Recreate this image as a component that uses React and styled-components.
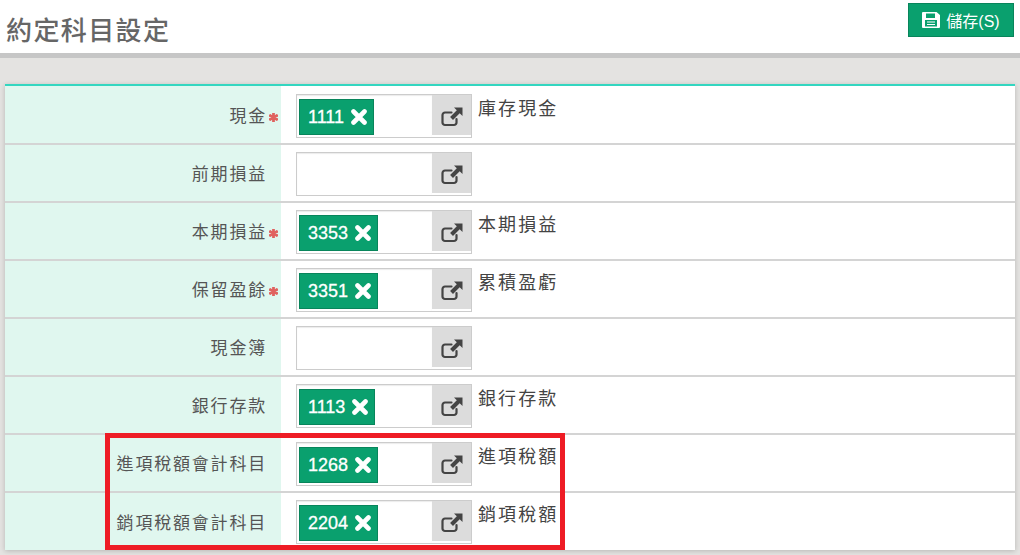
import React from "react";
import styled, { createGlobalStyle } from "styled-components";
import { FaAsterisk } from "react-icons/fa";

const GlobalStyle = createGlobalStyle`
  html, body {
    margin: 0;
    padding: 0;
    height: 555px;
    overflow: hidden;
    background: #e4e3e1;
    font-family: "Liberation Sans", "Noto Sans CJK TC", sans-serif;
  }
`;

const Header = styled.header`
  height: 58px;
  box-sizing: border-box;
  background: #fff;
  border-bottom: 5px solid #c6c6c6;
  display: flex;
  justify-content: space-between;
  padding: 3px 6px 0 6px;
`;

const Title = styled.h1`
  margin: 0;
  padding-top: 10px;
  font-size: 26px;
  line-height: 36px;
  font-weight: 500;
  letter-spacing: 1.4px;
  color: #666;
`;

const SaveButton = styled.button`
  width: 106px;
  height: 34px;
  box-sizing: border-box;
  display: flex;
  align-items: center;
  justify-content: center;
  gap: 6px;
  padding: 0;
  background: #0aa06e;
  border: 1px solid #08855b;
  color: #fff;
  font-family: inherit;
  font-size: 16px;
`;

const Card = styled.main`
  margin: 26px 5px 0;
  background: #fff;
  border-top: 2px solid #33d6c0;
  box-shadow: 0 1px 5px rgba(0, 0, 0, 0.2);
`;

const Row = styled.div`
  display: grid;
  grid-template-columns: 276px 1fr;
  height: ${(p) => (p.$first ? 59 : p.$last ? 57 : 58)}px;
  box-sizing: border-box;
  border-bottom: ${(p) => (p.$last ? "none" : "2px solid #d4d4d4")};
`;

const Label = styled.div`
  background: #e0f7ef;
  display: flex;
  align-items: center;
  justify-content: flex-end;
  padding-right: 14px;
  padding-bottom: 1px;
  padding-top: ${(p) => (p.$first ? 1 : 0)}px;
  font-size: 17px;
  letter-spacing: 1.8px;
  color: #555;
  position: relative;
`;

const Required = styled.span`
  position: absolute;
  right: 3px;
  top: ${(p) => (p.$first ? 27 : 26)}px;
  color: #e0625f;
  font-size: 9px;
  line-height: 9px;
  display: flex;
  svg {
    stroke: currentColor;
    stroke-width: 70px;
  }
`;

const Value = styled.div`
  display: flex;
  align-items: flex-start;
  padding: ${(p) => (p.$first ? 8 : 7)}px 0 0 15px;
  gap: 6px;
`;

const Picker = styled.div`
  width: 176px;
  height: 44px;
  box-sizing: border-box;
  border: 1px solid #ccc;
  display: flex;
`;

const Field = styled.div`
  flex: 1;
  padding: 4px 2px 0;
  display: flex;
  align-items: flex-start;
  box-shadow: inset 0 1px 1px rgba(0, 0, 0, 0.08);
`;

const Tag = styled.span`
  height: 36px;
  box-sizing: border-box;
  display: inline-flex;
  align-items: center;
  gap: 7px;
  padding: 0 6px 0 8px;
  background: #0aa06e;
  border: 1px solid #08855b;
  color: #fff;
  font-size: 18px;
  -webkit-text-stroke: 0.3px #fff;
`;

const LinkButton = styled.div`
  width: 39px;
  background: #dcdcdc;
  margin-bottom: 2px;
  padding-top: 4px;
  box-sizing: border-box;
  display: flex;
  align-items: center;
  justify-content: center;
  color: #444;
`;

const Name = styled.span`
  font-size: 18px;
  line-height: 28px;
  margin-top: 1px;
  letter-spacing: 2.1px;
  color: #444;
`;

const Highlighted = styled.div`
  position: relative;
`;

const RedBox = styled.div`
  position: absolute;
  left: 100px;
  top: -2px;
  width: 460px;
  height: 117px;
  box-sizing: border-box;
  border: 5px solid #ee1c25;
  pointer-events: none;
`;

const OpenIcon = () => (
  <svg width="22" height="20" viewBox="0 0 22 20" fill="none">
    <path d="M15.500 12v3.500a2.500 2.500 0 0 1-2.500 2.500H4a2.500 2.500 0 0 1-2.500-2.500V8A2.500 2.500 0 0 1 4 5.500h6.500" stroke="currentColor" strokeWidth="2.200" strokeLinecap="round" />
    <path d="M13 0.500h8.500V9l-2.800-2.800-6.700 6.700-2.900-2.900 6.700-6.700z" fill="currentColor" />
  </svg>
);

const CloseIcon = () => (
  <svg width="16" height="16" viewBox="0 0 16 16">
    <path d="M2.500 2.500l11 11M13.500 2.500l-11 11" stroke="#fff" strokeWidth="4.600" strokeLinecap="round" />
  </svg>
);

const SaveIcon = () => (
  <svg width="18" height="16" viewBox="0 0 18 16">
    <path
      fillRule="evenodd"
      fill="#fff"
      d="M1 0h13.500L18 3v12a1 1 0 0 1-1 1H1a1 1 0 0 1-1-1V1a1 1 0 0 1 1-1zM4 1.500V6h9V1.500zM3 8v6.500h12V8z"
    />
    <path fill="#fff" d="M5 9.500h8v1H5zM5 12h8v1H5z" />
  </svg>
);

const rows = [
  { label: "現金", required: true, code: "1111", name: "庫存現金", first: true },
  { label: "前期損益" },
  { label: "本期損益", required: true, code: "3353", name: "本期損益" },
  { label: "保留盈餘", required: true, code: "3351", name: "累積盈虧" },
  { label: "現金簿" },
  { label: "銀行存款", code: "1113", name: "銀行存款" },
];

const marked = [
  { label: "進項稅額會計科目", code: "1268", name: "進項稅額" },
  { label: "銷項稅額會計科目", code: "2204", name: "銷項稅額", last: true },
];

const SettingRow = ({ label, required, code, name, first, last }) => (
  <Row $first={first} $last={last}>
    <Label $first={first}>
      {label}
      {required && (
        <Required $first={first}>
          <FaAsterisk />
        </Required>
      )}
    </Label>
    <Value $first={first}>
      <Picker>
        <Field>
          {code && (
            <Tag>
              {code}
              <CloseIcon />
            </Tag>
          )}
        </Field>
        <LinkButton>
          <OpenIcon />
        </LinkButton>
      </Picker>
      {name && <Name>{name}</Name>}
    </Value>
  </Row>
);

export default function App() {
  return (
    <>
      <GlobalStyle />
      <Header>
        <Title>約定科目設定</Title>
        <SaveButton>
          <SaveIcon />
          儲存(S)
        </SaveButton>
      </Header>
      <Card>
        {rows.map((r) => (
          <SettingRow key={r.label} {...r} />
        ))}
        <Highlighted>
          {marked.map((r) => (
            <SettingRow key={r.label} {...r} />
          ))}
          <RedBox />
        </Highlighted>
      </Card>
    </>
  );
}
